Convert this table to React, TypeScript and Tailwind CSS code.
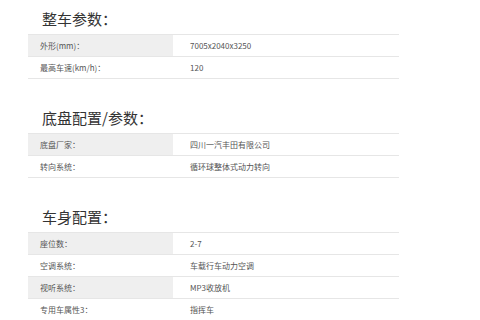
type Row = [string, string];

type Section = {
  title: string;
  rows: Row[];
};

const sections: Section[] = [
  {
    title: '整车参数：',
    rows: [
      ['外形(mm)：', '7005x2040x3250'],
      ['最高车速(km/h)：', '120'],
    ],
  },
  {
    title: '底盘配置/参数：',
    rows: [
      ['底盘厂家：', '四川一汽丰田有限公司'],
      ['转向系统：', '循环球整体式动力转向'],
    ],
  },
  {
    title: '车身配置：',
    rows: [
      ['座位数：', '2-7'],
      ['空调系统：', '车载行车动力空调'],
      ['视听系统：', 'MP3收放机'],
      ['专用车属性3：', '指挥车'],
    ],
  },
];

function ParamTable({ rows }: { rows: Row[] }) {
  return (
    <div className="border-t border-[#e6e6e6]">
      {rows.map(([label, value], i) => (
        <div key={label} className="flex h-[22px] border-b border-[#e6e6e6] text-[8px] text-[#555]">
          <div className={`flex w-[145px] items-center pl-[12px] ${i % 2 === 0 ? 'bg-[#efefef]' : ''}`}>
            {label}
          </div>
          <div className="flex flex-1 items-center pl-[17px]">{value}</div>
        </div>
      ))}
    </div>
  );
}

export default function App() {
  return (
    <div
      className="h-[320px] w-[480px] overflow-hidden bg-white pl-[28px] pt-[2px]"
      style={{ fontFamily: '"Noto Sans CJK SC", "Noto Sans", sans-serif' }}
    >
      <div className="flex w-[371px] flex-col gap-[22px]">
        {sections.map((s) => (
          <section key={s.title}>
            <h2 className="flex h-[32px] items-center pl-[14px] text-[15px] leading-none text-[#333]">
              {s.title}
            </h2>
            <ParamTable rows={s.rows} />
          </section>
        ))}
      </div>
    </div>
  );
}
